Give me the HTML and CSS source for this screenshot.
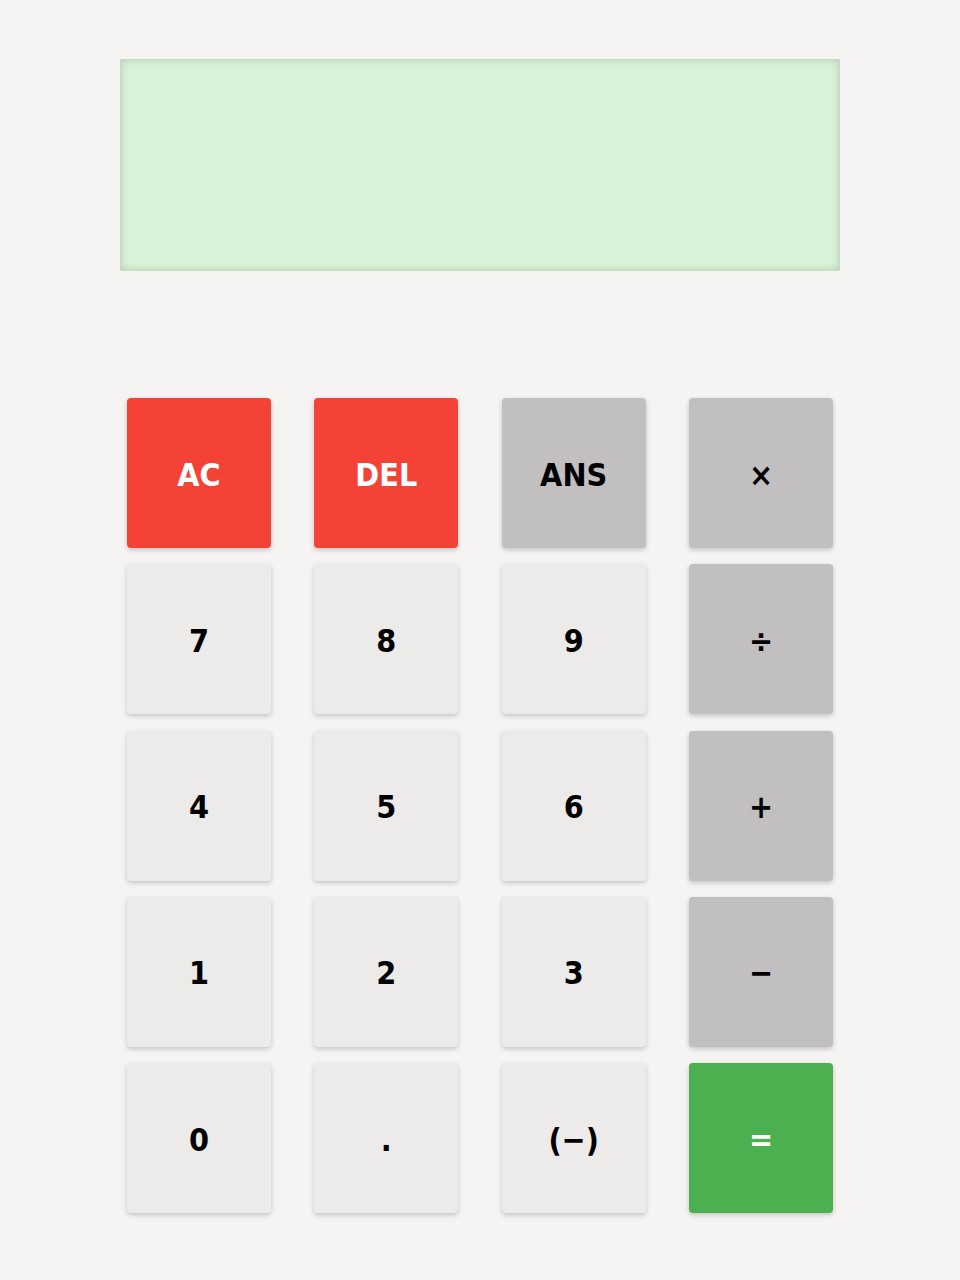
FILE: index.html
```html
<!DOCTYPE html>
<html>
<head>
<meta charset="utf-8">
<link rel="stylesheet" href="styles.css">
</head>
<body>
<div class="calc">
  <div class="display"></div>
  <div class="keys">
    <button class="key danger">AC</button>
    <button class="key danger">DEL</button>
    <button class="key op">ANS</button>
    <button class="key op">×</button>
    <button class="key">7</button>
    <button class="key">8</button>
    <button class="key">9</button>
    <button class="key op">÷</button>
    <button class="key">4</button>
    <button class="key">5</button>
    <button class="key">6</button>
    <button class="key op">+</button>
    <button class="key">1</button>
    <button class="key">2</button>
    <button class="key">3</button>
    <button class="key op">−</button>
    <button class="key">0</button>
    <button class="key">.</button>
    <button class="key">(−)</button>
    <button class="key equals">=</button>
  </div>
</div>
</body>
</html>
```
FILE: styles.css
```css
html, body {
  margin: 0;
  padding: 0;
  background: #f5f4f2;
}
body {
  font-family: "DejaVu Sans Condensed", "DejaVu Sans", sans-serif;
  height: 1280px;
}
.calc {
  width: 720px;
  margin: 0 auto;
  padding-top: 59px;
}
.display {
  height: 212px;
  background: #d8f3d8;
  border-radius: 2px;
  box-shadow: inset 0 0 10px rgba(0, 0, 0, 0.2);
}
.keys {
  margin-top: 127px;
  padding: 0 7px;
  display: grid;
  grid-template-columns: repeat(4, 144px);
  grid-auto-rows: 150px;
  justify-content: space-between;
  row-gap: 16.25px;
}
.key {
  border: none;
  border-radius: 4px;
  background: #ecebe9;
  color: #000;
  font-family: inherit;
  font-weight: bold;
  font-size: 32px;
  padding: 3px 0 0;
  box-shadow: 0 2px 5px rgba(0, 0, 0, 0.2);
}
.key.op {
  background: #c1bfc0;
}
.key.danger {
  background: #f44336;
  color: #fff;
}
.key.equals {
  background: #4caf50;
  color: #fff;
}
```
